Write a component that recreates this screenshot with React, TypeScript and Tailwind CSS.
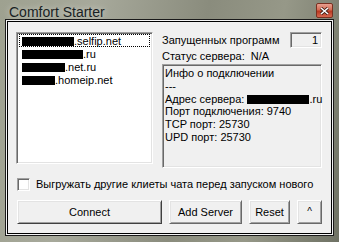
const sunken =
  "border border-t-[#a0a0a0] border-l-[#a0a0a0] border-b-white border-r-white shadow-[inset_1px_1px_0_#696969,inset_-1px_-1px_0_#e3e3e3]";
const raised =
  "border border-t-white border-l-white border-b-[#696969] border-r-[#696969] shadow-[inset_1px_1px_0_#e3e3e3,inset_-1px_-1px_0_#a0a0a0] bg-[#f0f0f0]";

const servers = [
  { hidden: 52, suffix: ".selfip.net" },
  { hidden: 61, suffix: ".ru" },
  { hidden: 43, suffix: ".net.ru" },
  { hidden: 33, suffix: ".homeip.net" },
];

const info = ["Инфо о подключении", "---"];

const Redacted = ({ w }: { w: number }) => (
  <span className="inline-block h-[9px] bg-black align-[-1px]" style={{ width: w }} />
);

export default function App() {
  return (
    <div
      className="w-[339px] h-[242px] flex flex-col overflow-hidden bg-[linear-gradient(100deg,#9ea190_0%,#a7a99b_25%,#8a8c7d_55%,#969888_75%,#6f7264_100%)] text-[11px] text-black"
      style={{ fontFamily: '"Liberation Sans", Arial, sans-serif' }}
    >
      {/* title bar */}
      <div className="h-[21px] flex items-start justify-between pl-[9px] pr-[6px]">
        <span className="mt-[2px] text-[14px] text-[#1a1f24] [text-shadow:0_0_6px_rgba(255,255,255,0.6)]">
          Comfort Starter
        </span>
        <div className="mt-[3px] w-[17px] h-[15px] rounded-[2px] border border-[#7a3020] bg-[linear-gradient(#e8a090_0%,#d46a52_45%,#b83820_55%,#d86850_100%)] flex items-center justify-center">
          <svg width="9" height="8" viewBox="0 0 9 8">
            <path d="M1 1 L8 7 M8 1 L1 7" stroke="#3a1a10" strokeWidth="3" />
            <path d="M1 1 L8 7 M8 1 L1 7" stroke="#fff" strokeWidth="1.6" />
          </svg>
        </div>
      </div>

      {/* client area */}
      <div className="ml-[7px] w-[325px] h-[213px] border border-black shadow-[0_0_0_1px_#f4f4f4,0_0_0_2px_#1a1a1a] bg-[#f0f0f0] pt-[10px] px-[8px] flex flex-col">
        <div className="flex gap-[9px]">
          {/* server list */}
          <div className={`w-[137px] h-[132px] bg-white ${sunken} pt-[1px] px-[2px]`}>
            {servers.map((s, i) => (
              <div
                key={i}
                className={`h-[13px] leading-[12px] pl-[2px] whitespace-nowrap ${
                  i === 0 ? "border border-dotted border-black" : "border border-transparent"
                }`}
              >
                <Redacted w={s.hidden} />
                {s.suffix}
              </div>
            ))}
          </div>

          {/* right column */}
          <div className="w-[160px] flex flex-col">
            <div className="h-[16px] flex items-center justify-between">
              <span>Запущенных программ</span>
              <div className={`w-[32px] h-[16px] ${sunken} flex items-center justify-end pr-[3px]`}>1</div>
            </div>
            <div className="h-[16px] flex items-center">Статус сервера:&nbsp;&nbsp;N/A</div>
            <div className={`h-[104px] ${sunken} pt-[2px] pl-[2px] leading-[12.8px]`}>
              {info.map((l) => (
                <div key={l}>{l}</div>
              ))}
              <div className="whitespace-nowrap">
                Адрес сервера: <Redacted w={62} />.ru
              </div>
              <div>Порт подключения: 9740</div>
              <div>TCP порт: 25730</div>
              <div>UPD порт: 25730</div>
            </div>
          </div>
        </div>

        {/* checkbox */}
        <label className="mt-[10px] ml-[1px] h-[13px] flex items-center gap-[6px]">
          <span className={`w-[13px] h-[13px] bg-white ${sunken}`} />
          <span>Выгружать другие клиеты чата перед запуском нового</span>
        </label>

        {/* buttons */}
        <div className="mt-[9px] ml-[1px] flex gap-[7px] h-[24px]">
          <button className={`w-[145px] h-full ${raised} !border-b-[#404040] !border-r-[#404040]`}>Connect</button>
          <button className={`w-[73px] h-full ${raised}`}>Add Server</button>
          <button className={`w-[41px] h-full ${raised}`}>Reset</button>
          <button className={`w-[25px] h-full ${raised} text-[10px] leading-none`}>^</button>
        </div>
      </div>
    </div>
  );
}
